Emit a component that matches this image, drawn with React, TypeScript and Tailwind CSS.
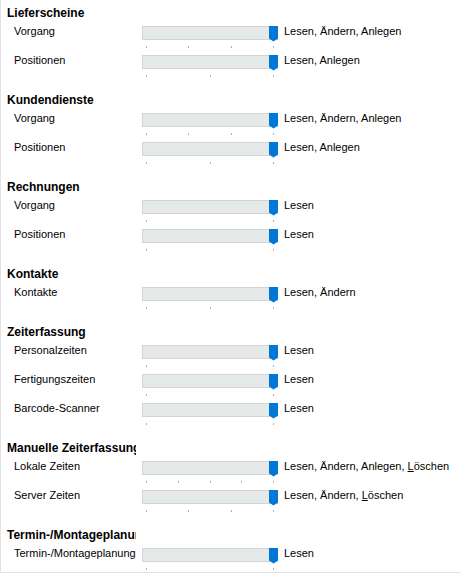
import React from "react";

type Row = { label: string; perms: React.ReactNode; levels: number };
type Section = { title: string; rows: Row[] };

const L = (
  <>
    <span className="underline underline-offset-[1px]">L</span>öschen
  </>
);

const sections: Section[] = [
  {
    title: "Lieferscheine",
    rows: [
      { label: "Vorgang", perms: "Lesen, Ändern, Anlegen", levels: 4 },
      { label: "Positionen", perms: "Lesen, Anlegen", levels: 3 },
    ],
  },
  {
    title: "Kundendienste",
    rows: [
      { label: "Vorgang", perms: "Lesen, Ändern, Anlegen", levels: 4 },
      { label: "Positionen", perms: "Lesen, Anlegen", levels: 3 },
    ],
  },
  {
    title: "Rechnungen",
    rows: [
      { label: "Vorgang", perms: "Lesen", levels: 2 },
      { label: "Positionen", perms: "Lesen", levels: 2 },
    ],
  },
  {
    title: "Kontakte",
    rows: [{ label: "Kontakte", perms: "Lesen, Ändern", levels: 3 }],
  },
  {
    title: "Zeiterfassung",
    rows: [
      { label: "Personalzeiten", perms: "Lesen", levels: 2 },
      { label: "Fertigungszeiten", perms: "Lesen", levels: 2 },
      { label: "Barcode-Scanner", perms: "Lesen", levels: 2 },
    ],
  },
  {
    title: "Manuelle Zeiterfassung",
    rows: [
      {
        label: "Lokale Zeiten",
        perms: <>Lesen, Ändern, Anlegen, {L}</>,
        levels: 5,
      },
      { label: "Server Zeiten", perms: <>Lesen, Ändern, {L}</>, levels: 4 },
    ],
  },
  {
    title: "Termin-/Montageplanung",
    rows: [{ label: "Termin-/Montageplanung", perms: "Lesen", levels: 2 }],
  },
];

function Slider({ levels }: { levels: number }) {
  return (
    <div className="relative w-[136px] pt-[2px]">
      <div className="h-[14px] w-[136px] border border-[#d3d3d3] bg-[#e6e9e9]" />
      <svg
        className="absolute left-[127px] top-[2px]"
        width="9"
        height="16"
        viewBox="0 0 9 16"
      >
        <path d="M0 0H9V12.5L4.5 15.5L0 12.5Z" fill="#0078d7" />
      </svg>
      <div className="mt-[6px] flex justify-between pl-[4px] pr-[4px]">
        {Array.from({ length: levels }).map((_, i) => (
          <div key={i} className="h-[2px] w-[1px] bg-[#b0b0b0]" />
        ))}
      </div>
    </div>
  );
}

export default function App() {
  return (
    <div
      className="h-[573px] w-[461px] overflow-hidden border-b border-l border-[#e2e2e2] bg-white pt-[6px] text-black"
      style={{ fontFamily: '"Liberation Sans", Arial, sans-serif' }}
    >
      {sections.map((s) => (
        <div key={s.title} className="mb-[11px]">
          <div className="mb-[4px] w-[135px] overflow-hidden whitespace-nowrap pl-[6px] text-[12px] font-bold leading-[14px]">
            {s.title}
          </div>
          {s.rows.map((r) => (
            <div key={r.label} className="flex h-[29px]">
              <div className="w-[141px] overflow-hidden whitespace-nowrap pl-[13px] text-[11px] leading-[14px]">
                {r.label}
              </div>
              <Slider levels={r.levels} />
              <div className="whitespace-nowrap pl-[6px] text-[11px] leading-[14px]">
                {r.perms}
              </div>
            </div>
          ))}
        </div>
      ))}
    </div>
  );
}
